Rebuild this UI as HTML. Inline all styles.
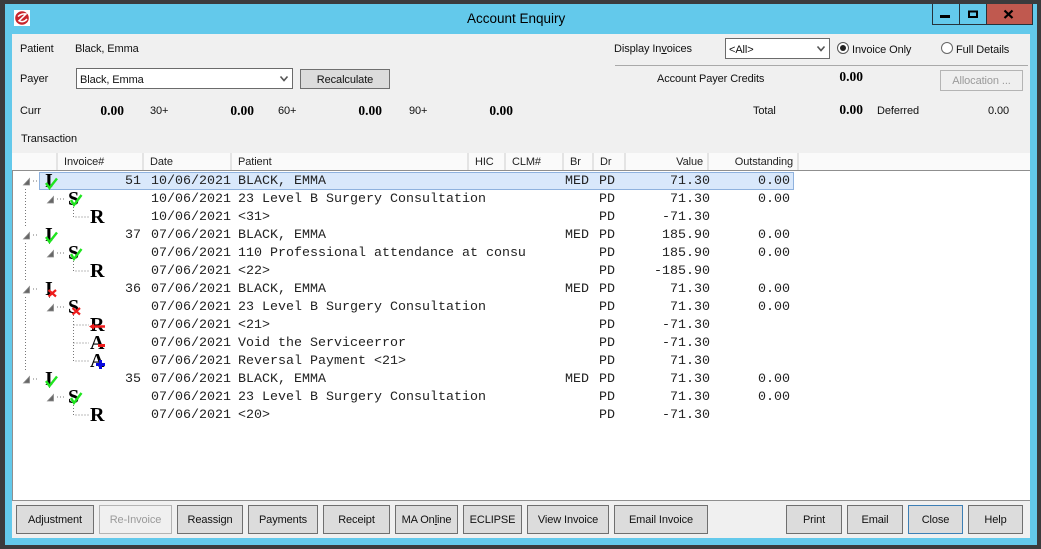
<!DOCTYPE html>
<html><head><meta charset="utf-8"><style>
html,body{margin:0;padding:0;width:1041px;height:549px;overflow:hidden;background:#3b3b3d}
#w{position:absolute;left:5px;top:4px;width:1032px;height:541px;background:#63c9eb}
#p{position:absolute;left:12px;top:34px;width:1018px;height:504px;background:#f0f0f0}
.t,.m,.b,.h{position:absolute;white-space:nowrap}
.t{font:11px/18px "Liberation Sans",sans-serif;color:#111;letter-spacing:-.1px}
.m{font:13.33px/20px "Liberation Mono",monospace;color:#222}
.b{font:bold 13.5px/16px "Liberation Serif",serif;color:#000;text-align:right}
.r{text-align:right}
.h{top:153px;height:17px;background:#fafafa;border-right:2px solid #e4e4e4;box-sizing:border-box;font:11px/19px "Liberation Sans",sans-serif;color:#222;letter-spacing:-.1px;padding:0 4px 0 6px}
.btn{position:absolute;top:505px;height:29px;box-sizing:border-box;background:#dcdcdc;border:1px solid #6f6f6f;font:11px/29px "Liberation Sans",sans-serif;letter-spacing:-.1px;color:#111;text-align:center}
.dis{background:#f0f0f0;border-color:#b4b4b4;color:#9a9a9a}
.sel{position:absolute;box-sizing:border-box;background:#fff;border:1px solid #6b6b6b;font:11px/22px "Liberation Sans",sans-serif;letter-spacing:-.1px;color:#111;padding-left:3px}
</style></head><body>
<div id="w"></div><div id="p"></div>

<!-- title bar -->
<svg style="position:absolute;left:14px;top:10px" width="16" height="16" viewBox="0 0 16 16"><rect width="16" height="16" fill="#fff"/><circle cx="8" cy="8" r="6.8" fill="#c9252c"/><path d="M4 6.500C6.500 4 10 3.500 12 4L5 10.800C7.500 12.500 11 11.500 13 9" fill="none" stroke="#fff" stroke-width="1.500"/></svg>
<div class="t" style="left:467px;top:9px;font-size:13.5px;line-height:20px;letter-spacing:0;color:#000">Account Enquiry</div>
<svg style="position:absolute;left:931px;top:4px" width="102" height="21" viewBox="0 0 102 21">
<rect x="28" y="0" width="27" height="20" fill="#63c9eb"/><rect x="55" y="0" width="46" height="20" fill="#c0594f"/>
<path d="M1.500 0V20.500H101.500V0M28.500 0V20M55.500 0V20" fill="none" stroke="#26323a"/>
<rect x="9" y="11" width="10" height="3" fill="#000"/>
<rect x="38" y="7.500" width="8" height="5.500" fill="none" stroke="#000" stroke-width="2"/>
<path d="M73.500 6.500L81.500 14M81.500 6.500L73.500 14" stroke="#000" stroke-width="2.200"/>
</svg>

<!-- top form -->
<div class="t" style="left:20px;top:40px">Patient</div>
<div class="t" style="left:75px;top:40px">Black, Emma</div>
<div class="t" style="left:20px;top:70px">Payer</div>
<div class="sel" style="left:76px;top:68px;width:217px;height:21px">Black, Emma</div>
<svg style="position:absolute;left:279px;top:75px" width="10" height="8"><path d="M1.500 1.500L5 5.500L8.500 1.500" fill="none" stroke="#555" stroke-width="1.600"/></svg>
<div class="btn" style="left:300px;top:69px;width:90px;height:20px;line-height:20px">Recalculate</div>
<div class="t" style="left:20px;top:102px">Curr</div>
<div class="b" style="left:84px;top:103px;width:40px">0.00</div>
<div class="t" style="left:150px;top:102px">30+</div>
<div class="b" style="left:214px;top:103px;width:40px">0.00</div>
<div class="t" style="left:278px;top:102px">60+</div>
<div class="b" style="left:342px;top:103px;width:40px">0.00</div>
<div class="t" style="left:409px;top:102px">90+</div>
<div class="b" style="left:473px;top:103px;width:40px">0.00</div>
<div class="t" style="left:21px;top:130px">Transaction</div>

<div class="t" style="left:614px;top:40px">Display In<u style="text-underline-offset:1px">v</u>oices</div>
<div class="sel" style="left:725px;top:38px;width:105px;height:21px">&lt;All&gt;</div>
<svg style="position:absolute;left:816px;top:45px" width="10" height="8"><path d="M1.500 1.500L5 5.500L8.500 1.500" fill="none" stroke="#555" stroke-width="1.600"/></svg>
<svg style="position:absolute;left:836px;top:41px" width="180" height="14">
<circle cx="7" cy="7" r="5.500" fill="#fff" stroke="#555"/><circle cx="7" cy="7" r="3" fill="#222"/>
<circle cx="111" cy="7" r="5.500" fill="#fff" stroke="#666"/></svg>
<div class="t" style="left:852px;top:41px">Invoice Only</div>
<div class="t" style="left:956px;top:41px">Full Details</div>
<div style="position:absolute;left:615px;top:65px;width:413px;height:1px;background:#a9a9a9"></div>
<div class="t" style="left:657px;top:70px">Account Payer Credits</div>
<div class="b" style="left:823px;top:69px;width:40px">0.00</div>
<div class="btn dis" style="left:940px;top:70px;width:83px;height:21px;line-height:21px;background:#efefef">Allocation ...</div>
<div class="t" style="left:753px;top:102px">Total</div>
<div class="b" style="left:823px;top:102px;width:40px">0.00</div>
<div class="t" style="left:877px;top:102px">Deferred</div>
<div class="t r" style="left:969px;top:102px;width:40px">0.00</div>

<!-- header -->
<div style="position:absolute;left:12px;top:153px;width:1018px;height:17px;background:#fafafa"></div>
<div class="h" style="left:12px;width:46px"></div>
<div class="h" style="left:58px;width:86px">Invoice#</div>
<div class="h" style="left:144px;width:88px">Date</div>
<div class="h" style="left:232px;width:237px">Patient</div>
<div class="h" style="left:469px;width:37px">HIC</div>
<div class="h" style="left:506px;width:58px">CLM#</div>
<div class="h" style="left:564px;width:30px">Br</div>
<div class="h" style="left:594px;width:32px">Dr</div>
<div class="h r" style="left:626px;width:83px">Value</div>
<div class="h r" style="left:709px;width:90px">Outstanding</div>

<!-- list -->
<div style="position:absolute;left:12px;top:170px;width:1018px;height:331px;box-sizing:border-box;background:#fff;border-top:1px solid #8f8f8f;border-bottom:1px solid #8f8f8f;border-left:1px solid #8f8f8f"></div>
<div style="position:absolute;left:39px;top:172px;width:755px;height:18px;box-sizing:border-box;background:#d9e8fb;border:1px solid #8fb2de"></div>

<svg style="position:absolute;left:0;top:0" width="130" height="440" viewBox="0 0 130 440">
<g fill="none" stroke="#777" stroke-dasharray="1 2">
<path d="M25.500 189V226M25.500 243V280M25.500 297V370"/>
<path d="M33 181H39M33 235H39M33 289H39M33 379H39"/>
<path d="M57 199H65M57 253H65M57 307H65M57 397H65"/>
<path d="M73.500 207V217H89M73.500 261V271H89M73.500 315V361H89M73.500 325H89M73.500 343H89M73.500 405V415H89"/>
<path d="M49.500 189V192M49.500 243V246M49.500 297V300M49.500 387V390"/>
</g>
<g fill="#666" stroke="#8a8a8a" stroke-width=".8">
<path d="M29.500 178.500V185H23.500ZM29.500 232.500V239H23.500ZM29.500 286.500V293H23.500ZM29.500 376.500V383H23.500Z"/>
<path d="M53.500 196.500V203H47.500ZM53.500 250.500V257H47.500ZM53.500 304.500V311H47.500ZM53.500 394.500V401H47.500Z"/>
</g>
<g font-family="Liberation Serif,serif" font-weight="bold" font-size="20" fill="#000">
<text x="45" y="187">I</text><text x="68" y="205">S</text><text x="90" y="223">R</text>
<text x="45" y="241">I</text><text x="68" y="259">S</text><text x="90" y="277">R</text>
<text x="45" y="295">I</text><text x="68" y="313">S</text><text x="90" y="331">R</text><text x="90" y="349">A</text><text x="90" y="367">A</text>
<text x="45" y="385">I</text><text x="68" y="403">S</text><text x="90" y="421">R</text>
</g>
<g fill="none" stroke="#1fe51f" stroke-width="2.400">
<path d="M46 183L49.500 188L57 178.500M46 237L49.500 242L57 232.500M46 381L49.500 386L57 376.500"/>
<path d="M71 200L74 205L81.500 195M71 254L74 259L81.500 249M71 398L74 403L81.500 393"/>
</g>
<path d="M48.500 290L56 296.500M56 290L48.500 296.500M72.500 308L80 314.500M80 308L72.500 314.500" stroke="#ee1c1c" stroke-width="2.200"/>
<path d="M91 326.500H105" stroke="#ee1c1c" stroke-width="2.500"/><path d="M89 326.500L94 323.500V329.500Z" fill="#ee1c1c"/>
<path d="M98 345.500H105" stroke="#ee1c1c" stroke-width="3"/>
<path d="M96 364.500H105M100.500 360V369" stroke="#0a0ae0" stroke-width="3"/>
</svg>

<!-- rows -->
<div class="m r" style="left:100px;top:172px;width:41px">51</div>
<div class="m r" style="left:100px;top:226px;width:41px">37</div>
<div class="m r" style="left:100px;top:280px;width:41px">36</div>
<div class="m r" style="left:100px;top:370px;width:41px">35</div>

<div class="m" style="left:151px;top:172px">10/06/2021</div><div class="m" style="left:238px;top:172px">BLACK, EMMA</div>
<div class="m" style="left:151px;top:190px">10/06/2021</div><div class="m" style="left:238px;top:190px">23 Level B Surgery Consultation</div>
<div class="m" style="left:151px;top:208px">10/06/2021</div><div class="m" style="left:238px;top:208px">&lt;31&gt;</div>
<div class="m" style="left:151px;top:226px">07/06/2021</div><div class="m" style="left:238px;top:226px">BLACK, EMMA</div>
<div class="m" style="left:151px;top:244px">07/06/2021</div><div class="m" style="left:238px;top:244px">110 Professional attendance at consu</div>
<div class="m" style="left:151px;top:262px">07/06/2021</div><div class="m" style="left:238px;top:262px">&lt;22&gt;</div>
<div class="m" style="left:151px;top:280px">07/06/2021</div><div class="m" style="left:238px;top:280px">BLACK, EMMA</div>
<div class="m" style="left:151px;top:298px">07/06/2021</div><div class="m" style="left:238px;top:298px">23 Level B Surgery Consultation</div>
<div class="m" style="left:151px;top:316px">07/06/2021</div><div class="m" style="left:238px;top:316px">&lt;21&gt;</div>
<div class="m" style="left:151px;top:334px">07/06/2021</div><div class="m" style="left:238px;top:334px">Void the Serviceerror</div>
<div class="m" style="left:151px;top:352px">07/06/2021</div><div class="m" style="left:238px;top:352px">Reversal Payment &lt;21&gt;</div>
<div class="m" style="left:151px;top:370px">07/06/2021</div><div class="m" style="left:238px;top:370px">BLACK, EMMA</div>
<div class="m" style="left:151px;top:388px">07/06/2021</div><div class="m" style="left:238px;top:388px">23 Level B Surgery Consultation</div>
<div class="m" style="left:151px;top:406px">07/06/2021</div><div class="m" style="left:238px;top:406px">&lt;20&gt;</div>

<div class="m" style="left:565px;top:172px">MED</div>
<div class="m" style="left:565px;top:226px">MED</div>
<div class="m" style="left:565px;top:280px">MED</div>
<div class="m" style="left:565px;top:370px">MED</div>

<div class="m" style="left:599px;top:172px">PD</div>
<div class="m" style="left:599px;top:190px">PD</div>
<div class="m" style="left:599px;top:208px">PD</div>
<div class="m" style="left:599px;top:226px">PD</div>
<div class="m" style="left:599px;top:244px">PD</div>
<div class="m" style="left:599px;top:262px">PD</div>
<div class="m" style="left:599px;top:280px">PD</div>
<div class="m" style="left:599px;top:298px">PD</div>
<div class="m" style="left:599px;top:316px">PD</div>
<div class="m" style="left:599px;top:334px">PD</div>
<div class="m" style="left:599px;top:352px">PD</div>
<div class="m" style="left:599px;top:370px">PD</div>
<div class="m" style="left:599px;top:388px">PD</div>
<div class="m" style="left:599px;top:406px">PD</div>

<div class="m r" style="left:630px;top:172px;width:80px">71.30</div>
<div class="m r" style="left:630px;top:190px;width:80px">71.30</div>
<div class="m r" style="left:630px;top:208px;width:80px">-71.30</div>
<div class="m r" style="left:630px;top:226px;width:80px">185.90</div>
<div class="m r" style="left:630px;top:244px;width:80px">185.90</div>
<div class="m r" style="left:630px;top:262px;width:80px">-185.90</div>
<div class="m r" style="left:630px;top:280px;width:80px">71.30</div>
<div class="m r" style="left:630px;top:298px;width:80px">71.30</div>
<div class="m r" style="left:630px;top:316px;width:80px">-71.30</div>
<div class="m r" style="left:630px;top:334px;width:80px">-71.30</div>
<div class="m r" style="left:630px;top:352px;width:80px">71.30</div>
<div class="m r" style="left:630px;top:370px;width:80px">71.30</div>
<div class="m r" style="left:630px;top:388px;width:80px">71.30</div>
<div class="m r" style="left:630px;top:406px;width:80px">-71.30</div>

<div class="m r" style="left:730px;top:172px;width:60px">0.00</div>
<div class="m r" style="left:730px;top:190px;width:60px">0.00</div>
<div class="m r" style="left:730px;top:226px;width:60px">0.00</div>
<div class="m r" style="left:730px;top:244px;width:60px">0.00</div>
<div class="m r" style="left:730px;top:280px;width:60px">0.00</div>
<div class="m r" style="left:730px;top:298px;width:60px">0.00</div>
<div class="m r" style="left:730px;top:370px;width:60px">0.00</div>
<div class="m r" style="left:730px;top:388px;width:60px">0.00</div>

<!-- buttons -->
<div class="btn" style="left:16px;width:78px">Adjustment</div>
<div class="btn dis" style="left:99px;width:73px">Re-Invoice</div>
<div class="btn" style="left:177px;width:66px">Reassign</div>
<div class="btn" style="left:248px;width:70px">Payments</div>
<div class="btn" style="left:323px;width:67px">Receipt</div>
<div class="btn" style="left:395px;width:63px">MA On<u style="text-underline-offset:1px">l</u>ine</div>
<div class="btn" style="left:463px;width:59px">ECLIPSE</div>
<div class="btn" style="left:527px;width:82px">View Invoice</div>
<div class="btn" style="left:614px;width:94px">Email Invoice</div>
<div class="btn" style="left:786px;width:56px">Print</div>
<div class="btn" style="left:847px;width:56px">Email</div>
<div class="btn" style="left:908px;width:55px;border-color:#3d7fb5">Close</div>
<div class="btn" style="left:968px;width:55px">Help</div>
</body></html>
